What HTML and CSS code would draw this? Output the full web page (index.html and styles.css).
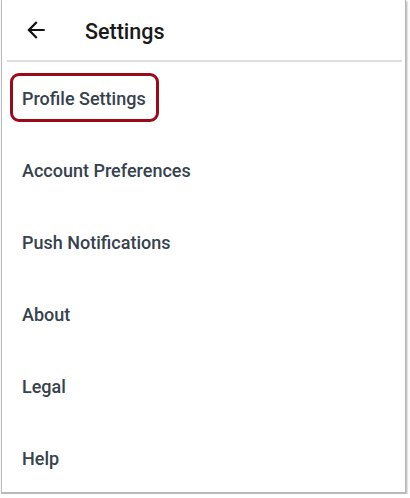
FILE: index.html
```html
<!DOCTYPE html>
<html>
<head>
<meta charset="utf-8">
<link rel="stylesheet" href="styles.css">
</head>
<body>
<div class="window">
  <header class="toolbar">
    <span class="back">
      <svg width="26" height="26" viewBox="0 0 24 24"><path d="M20 11H7.83l5.59-5.59L12 4l-8 8 8 8 1.41-1.41L7.83 13H20v-2z" fill="#111"/></svg>
    </span>
    <h1 class="title">Settings</h1>
  </header>
  <div class="divider"></div>
  <ul class="menu">
    <li class="item highlighted">Profile Settings</li>
    <li class="item">Account Preferences</li>
    <li class="item">Push Notifications</li>
    <li class="item">About</li>
    <li class="item">Legal</li>
    <li class="item">Help</li>
  </ul>
</div>
</body>
</html>
```
FILE: styles.css
```css
html, body {
  margin: 0;
  padding: 0;
  background: #ffffff;
}
body {
  font-family: Roboto, "Noto Sans", sans-serif;
}
.window {
  margin-left: 1px;
  width: 405px;
  height: 494px;
  box-sizing: border-box;
  border: solid #b9b9b9;
  border-width: 0 1px 2px 1px;
  box-shadow: 1px 1px 2px rgba(0,0,0,0.35);
  background: #fff;
}
.toolbar {
  height: 60px;
  display: flex;
  align-items: center;
}
.back {
  width: 26px;
  height: 26px;
  margin-left: 21px;
  margin-bottom: 1px;
  display: flex;
}
.title {
  margin: 3px 0 0 36px;
  font-size: 21.5px;
  font-weight: 500;
  color: #1a1a1a;
}
.divider {
  height: 2px;
  margin: 0 3px 0 5px;
  background: #dedede;
}
.menu {
  list-style: none;
  margin: 0;
  padding: 0;
}
.item {
  position: relative;
  height: 72px;
  display: flex;
  align-items: center;
  padding-left: 20px;
  font-size: 18px;
  font-weight: 500;
  color: #36424d;
}
.highlighted::after {
  content: "";
  position: absolute;
  left: 8px;
  top: 11px;
  width: 143px;
  height: 43px;
  border: 3px solid #9b0a18;
  border-radius: 9px;
}
```
